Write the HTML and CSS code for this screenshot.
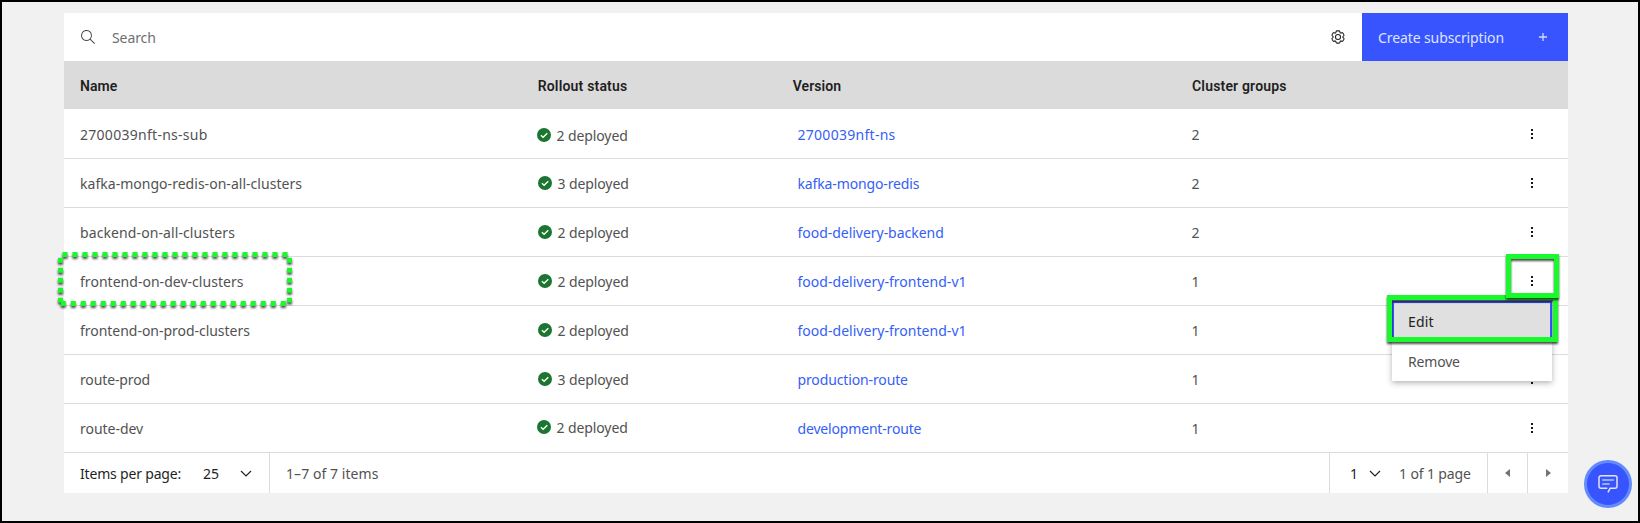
FILE: index.html
```
<!DOCTYPE html>
<html lang="en">
<head>
<meta charset="utf-8">
<title>Subscriptions</title>
<link rel="stylesheet" href="styles.css">
</head>
<body>
<svg class="defs" width="0" height="0">
  <symbol id="ok" viewBox="0 0 14 14"><circle cx="7" cy="7" r="7" fill="#1c7632"/><path d="M3.9 7.2 6.1 9.3 10.3 5.2" fill="none" stroke="#fff" stroke-width="1.3"/></symbol>
  <symbol id="dots" viewBox="0 0 2 10"><path d="M0 0h2v2H0zM0 4h2v2H0zM0 8h2v2H0z"/></symbol>
  <symbol id="chevron" viewBox="0 0 12 7"><path d="M1 1l5 5 5-5" fill="none" stroke="#222" stroke-width="1.2"/></symbol>
</svg>
<main class="panel">
  <div class="toolbar">
    <svg class="search-icon" width="16" height="16" viewBox="0 0 16 16"><path d="M15 14.3L10.7 10c1.9-2.3 1.6-5.8-.7-7.7S4.2.7 2.3 3 .7 8.8 3 10.7c2 1.7 5 1.7 7 0l4.3 4.3.7-.7zM2 6.5C2 4 4 2 6.5 2S11 4 11 6.5 9 11 6.5 11 2 9 2 6.5z"/></svg>
    <span class="search-text">Search</span>
    <svg class="gear" width="14" height="14" viewBox="0 0 16 16"><path d="M13.5 8.4v-.8l1-.8c.4-.3.5-.9.2-1.3l-1.2-2c-.2-.3-.5-.5-.9-.5-.1 0-.2 0-.3.1l-1.2.4c-.2-.1-.4-.3-.7-.4l-.3-1.3c-.1-.5-.5-.8-1-.8H6.8c-.5 0-.9.3-1 .8l-.3 1.3c-.2.1-.5.2-.7.4l-1.2-.4c-.1-.1-.2-.1-.3-.1-.4 0-.7.2-.9.5l-1.2 2c-.2.4-.1.9.3 1.3l1 .8v.8l-1 .8c-.4.3-.5.9-.3 1.3l1.2 2c.2.3.5.5.9.5.1 0 .2 0 .3-.1l1.2-.4c.2.1.4.3.7.4l.3 1.3c.1.5.5.8 1 .8h2.4c.5 0 .9-.3 1-.8l.3-1.3c.2-.1.5-.2.7-.4l1.2.4c.1 0 .2.1.3.1.4 0 .7-.2.9-.5l1.2-2c.2-.4.1-.9-.3-1.3z"/><circle cx="8" cy="8" r="2.9"/></svg>
    <button class="create"><span>Create subscription</span><svg width="8" height="8" viewBox="0 0 8 8"><path d="M4 0v8M0 4h8" stroke="#d3daff" stroke-width="1.3"/></svg></button>
  </div>
  <div class="row head">
    <div class="h-name">Name</div><div>Rollout status</div><div class="h-version">Version</div><div>Cluster groups</div>
  </div>
  <div class="row first">
    <div class="ls-digits">2700039nft-ns-sub</div><div class="status"><svg class="ok"><use href="#ok"/></svg>2 deployed</div><div class="link ls-digits">2700039nft-ns</div><div class="count">2</div><svg class="dots"><use href="#dots"/></svg>
  </div>
  <div class="row">
    <div class="ls-base">kafka-mongo-redis-on-all-clusters</div><div class="status"><svg class="ok"><use href="#ok"/></svg>3 deployed</div><div class="link ls-tight">kafka-mongo-redis</div><div class="count">2</div><svg class="dots"><use href="#dots"/></svg>
  </div>
  <div class="row">
    <div class="ls-wide">backend-on-all-clusters</div><div class="status"><svg class="ok"><use href="#ok"/></svg>2 deployed</div><div class="link">food-delivery-backend</div><div class="count">2</div><svg class="dots"><use href="#dots"/></svg>
  </div>
  <div class="row">
    <div class="ls-base">frontend-on-dev-clusters</div><div class="status"><svg class="ok"><use href="#ok"/></svg>2 deployed</div><div class="link ls-base">food-delivery-frontend-v1</div><div class="count">1</div><svg class="dots"><use href="#dots"/></svg>
  </div>
  <div class="row">
    <div>frontend-on-prod-clusters</div><div class="status"><svg class="ok"><use href="#ok"/></svg>2 deployed</div><div class="link ls-base">food-delivery-frontend-v1</div><div class="count">1</div><svg class="dots"><use href="#dots"/></svg>
  </div>
  <div class="row">
    <div class="ls-tight">route-prod</div><div class="status"><svg class="ok"><use href="#ok"/></svg>3 deployed</div><div class="link ls-tight">production-route</div><div class="count">1</div><svg class="dots"><use href="#dots"/></svg>
  </div>
  <div class="row last">
    <div>route-dev</div><div class="status"><svg class="ok"><use href="#ok"/></svg>2 deployed</div><div class="link ls-tighter">development-route</div><div class="count">1</div><svg class="dots"><use href="#dots"/></svg>
  </div>
  <div class="pagination">
    <div class="per-page"><span class="label">Items per page:</span><span class="size">25</span><svg class="chevron"><use href="#chevron"/></svg></div>
    <div class="range">1–7 of 7 items</div>
    <div class="page-select"><span class="current">1</span><svg class="chevron"><use href="#chevron"/></svg><span class="of">1 of 1 page</span></div>
    <div class="nav"><svg width="5" height="8" viewBox="0 0 5 8"><path d="M5 0v8L0 4z"/></svg></div>
    <div class="nav next"><svg width="5" height="8" viewBox="0 0 5 8"><path d="M0 0v8l5-4z"/></svg></div>
  </div>
</main>

<div class="menu"><div class="item active">Edit</div><div class="item remove">Remove</div></div>
<div class="mark mark-edit"></div>
<div class="mark mark-dots"></div>
<svg class="mark-name" width="234" height="54" viewBox="0 0 234 54">
  <g stroke="#18fa2c" stroke-width="5" stroke-dasharray="5 5">
    <path d="M4.5 2.5H230"/><path d="M2.5 5.7V50.5"/><path d="M231.5 5.7V50.5"/><path d="M2.8 51.5H229"/>
  </g>
</svg>
<button class="chat"><svg width="20" height="18" viewBox="0 0 20 18" fill="none" stroke="#dfe5ff" stroke-width="1.5"><path d="M10 17.4 12.1 13.3H17a2 2 0 0 0 2-2V2.8a2 2 0 0 0-2-2H3a2 2 0 0 0-2 2v8.5a2 2 0 0 0 2 2h6.3"/><path d="M4.2 5h11.6M4.2 9h7.4" stroke="#b8c6ff"/></svg></button>
</body>
</html>
```
FILE: styles.css
```
* { box-sizing: border-box; }
html { height: 100%; }
body {
  margin: 0;
  height: 523px;
  padding: 11px 70px 0 62px;
  border: 2px solid #000;
  background: #f1f1f1;
  color: #525252;
  font: 14px/19px "Noto Sans", sans-serif;
  letter-spacing: -0.03px;
  overflow: hidden;
}
.defs { position: absolute; }
button { border: 0; padding: 0; font: inherit; letter-spacing: inherit; }
svg { display: block; flex: none; }

.panel { width: 1504px; background: #fff; }

.toolbar { display: flex; align-items: center; height: 48px; padding-left: 16px; }
.search-icon { fill: #4a4a4a; }
.search-text { flex: 1; padding: 0 0 0 16px; color: #6f6f6f; letter-spacing: -0.08px; }
.gear { margin: 0 17px 0 0; fill: none; stroke: #222; stroke-width: 1.2; overflow: visible; }
.create {
  display: flex; align-items: center; justify-content: space-between;
  width: 206px; height: 48px; padding: 0 21px 0 16px;
  background: #3754ff; color: #dfe4ff; letter-spacing: -0.1px;
}
.create span { padding-bottom: 0; }

.row {
  display: grid;
  grid-template-columns: 457px 260.5px 393.5px 341px 1fr;
  height: 49px;
  padding: 15px 0 0 16px;
  border-bottom: 1px solid #dcdcdc;
}
.row.head {
  grid-template-columns: 457.7px 255px 399.3px 1fr;
  height: 48px;
  padding-top: 16px;
  border: 0;
  background: #dbdbdb;
  color: #1f1f1f;
  font-family: Roboto, sans-serif;
  font-weight: 600;
  letter-spacing: 0.18px;
}
.row.head .h-name { letter-spacing: 0.05px; }
.row.head .h-version { letter-spacing: 0.07px; }
.row.first { height: 50px; padding-top: 16px; }
.status { display: flex; gap: 5.5px; padding-left: 1px; letter-spacing: -0.1px; }
.first .status { padding: 1px 0 0 0; }
.last .status { padding-left: 0; margin-top: -1px; }
.ok { width: 14px; height: 14px; margin-top: 2px; }
.link { color: #3560f7; }
.count { padding-left: 0.5px; }
.dots { width: 2px; height: 10px; margin-top: 4px; margin-left: -1px; justify-self: start; fill: #161616; }
.ls-digits { letter-spacing: 0.28px; }
.ls-wide { letter-spacing: 0.1px; }
.ls-base { letter-spacing: 0.03px; }
.ls-tight { letter-spacing: -0.13px; }
.ls-tighter { letter-spacing: -0.17px; }

.pagination { display: flex; width: 1503px; height: 40px; }
.pagination > div { display: flex; padding-top: 11px; }
.chevron { width: 12px; height: 7px; margin-top: 6px; }
.per-page { width: 206px; padding-left: 16px; border-right: 1px solid #dcdcdc; color: #1f1f1f; }
.label { width: 123px; letter-spacing: -0.18px; }
.size { width: 37px; }
.pagination > .range { flex: 1; padding-left: 16px; letter-spacing: 0.06px; }
.page-select { width: 158px; padding-left: 20px; border-left: 1px solid #dcdcdc; }
.current { width: 19px; color: #1f1f1f; }
.of { padding-left: 18px; letter-spacing: -0.13px; }
.pagination > .nav { width: 40px; padding: 16px 0 0 17px; border-left: 1px solid #dcdcdc; fill: #737373; }
.pagination > .next { padding-left: 18px; }

.menu {
  position: absolute; left: 1392px; top: 301px; width: 160px;
  background: #fff; box-shadow: 0 2px 6px rgba(0, 0, 0, .3);
}
.item { height: 40px; padding: 11px 16px 0; }
.item.active { padding: 9px 14px 0; border: 2px solid #3754ff; background: #e0e0e0; color: #222; letter-spacing: 0.2px; }
.item.remove { letter-spacing: -0.18px; }

.mark { position: absolute; border: 5px solid #18fa2c; filter: drop-shadow(0 2px 1px rgba(0, 0, 0, .7)); }
.mark-edit { left: 1387px; top: 295px; width: 171px; height: 47px; }
.mark-dots { left: 1506px; top: 254px; width: 53px; height: 44px; }
.mark-name { position: absolute; left: 58px; top: 252px; overflow: visible; filter: drop-shadow(0 2px 1px rgba(0, 0, 0, .7)); }

.chat {
  position: absolute; left: 1584px; top: 460px; width: 48px; height: 48px;
  display: grid; place-items: center;
  border: 3px solid #648bfb; border-radius: 50%; background: #3754ff;
}
```
